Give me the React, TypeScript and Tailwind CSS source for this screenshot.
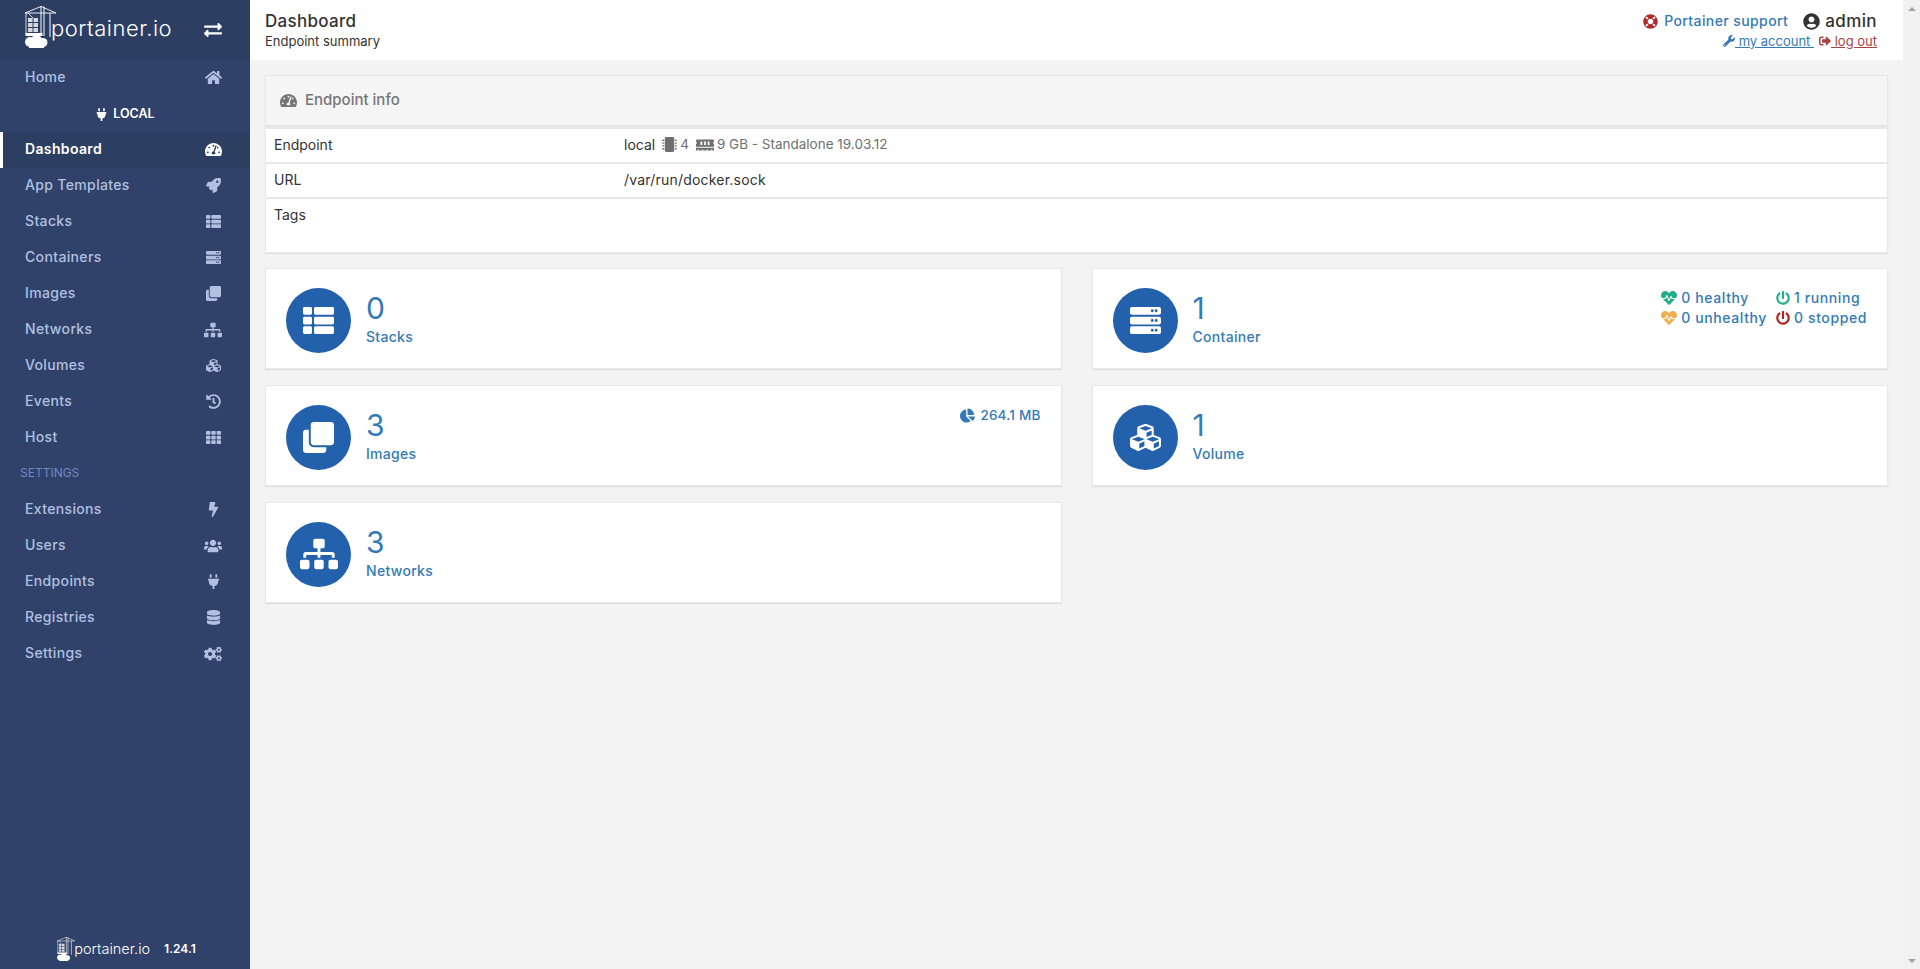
import React from "react";
import {
  FaHome, FaTachometerAlt, FaRocket, FaThList, FaServer, FaClone, FaSitemap, FaCubes, FaHistory, FaTh,
  FaBolt, FaUsers, FaPlug, FaDatabase, FaCogs, FaExchangeAlt, FaLifeRing, FaUserCircle, FaWrench,
  FaSignOutAlt, FaMicrochip, FaMemory, FaHeartbeat, FaPowerOff, FaChartPie,
} from "react-icons/fa";

const font = "font-['Inter','Liberation_Sans',sans-serif]";

function Logo({ small }: { small?: boolean }) {
  return (
    <svg viewBox="0 0 31 42" className={small ? "h-[24px] w-[18px]" : "h-[42px] w-[31px]"} fill="none">
      <path d="M0 7 L16 0.5 L31 7 M0 7 H31" stroke="#fff" strokeWidth="0.9" />
      <path d="M16 0 V30 M19 0.500 V30 M25 7 V31" stroke="#fff" strokeWidth="1" />
      <path d="M1 7 V28 M3 7 L8 12" stroke="#fff" strokeWidth="0.8" />
      <path d="M3 12h4.500v4H3zM8.500 12h4.500v4H8.500zM3 17h4.500v4H3zM8.500 17h4.500v4H8.500zM3 22h4.500v4H3zM8.500 22h4.500v4H8.500z" fill="#fff" fillOpacity="0.8" />
      <path d="M0.500 27h17v3h-17z" fill="#fff" />
      <circle cx="5" cy="36" r="5" fill="#fff" />
      <circle cx="11.500" cy="34.500" r="5.500" fill="#fff" />
      <circle cx="18" cy="36.500" r="4.500" fill="#fff" />
      <path d="M4 37h15v5H4z" fill="#fff" />
    </svg>
  );
}

const items: [string, React.ElementType, number, boolean?][] = [
  ["Dashboard", FaTachometerAlt, 17, true],
  ["App Templates", FaRocket, 15],
  ["Stacks", FaThList, 15],
  ["Containers", FaServer, 15],
  ["Images", FaClone, 15],
  ["Networks", FaSitemap, 18],
  ["Volumes", FaCubes, 15],
  ["Events", FaHistory, 15],
  ["Host", FaTh, 15],
];
const settings: [string, React.ElementType, number][] = [
  ["Extensions", FaBolt, 15],
  ["Users", FaUsers, 18],
  ["Endpoints", FaPlug, 15],
  ["Registries", FaDatabase, 15],
  ["Settings", FaCogs, 18],
];

function NavRow({ label, Icon, size, active }: { label: string; Icon: React.ElementType; size: number; active?: boolean }) {
  return (
    <div
      className={
        "flex h-9 items-center justify-between pb-[3px] pr-[28px] text-[14px] tracking-[0.35px] " +
        (active ? "border-l-[3px] border-white bg-[#2d3e63] pl-[22px] font-semibold text-white" : "pl-[25px] font-medium text-[#b1c0e0]")
      }
    >
      <span>{label}</span>
      <span className="flex w-[18px] justify-center pt-[2px]">
        <Icon size={size} />
      </span>
    </div>
  );
}

function Sidebar() {
  return (
    <aside className="flex h-full w-[250px] shrink-0 flex-col bg-[#30426a]">
      <div className="flex h-[60px] items-center justify-between bg-[#2d3e63] pl-[25px] pr-[28px]">
        <div className="-mt-[6px] flex items-center">
          <Logo />
          <span className="-ml-[5px] mt-[2px] text-[22px] font-light tracking-[0.5px] text-white">portainer.io</span>
        </div>
        <FaExchangeAlt className="text-[18px] text-white" />
      </div>
      <NavRow label="Home" Icon={FaHome} size={17} />
      <div className="flex h-9 items-center justify-center gap-[5px] text-[12.5px] font-semibold text-white">
        <FaPlug className="text-[13px]" />
        LOCAL
      </div>
      {items.map(([l, I, s, a]) => (
        <NavRow key={l} label={l} Icon={I} size={s} active={a} />
      ))}
      <div className="flex h-9 items-center pb-[2px] pl-[20px] text-[12px] text-[#6f8ac4]">SETTINGS</div>
      {settings.map(([l, I, s]) => (
        <NavRow key={l} label={l} Icon={I} size={s} />
      ))}
      <div className="mt-auto flex h-[40px] items-center justify-center pl-[3px]">
        <Logo small />
        <span className="-ml-[1px] text-[14.5px] font-light text-white">portainer.io</span>
        <span className="ml-[14px] text-[12px] font-semibold text-white">1.24.1</span>
      </div>
    </aside>
  );
}

function Header() {
  return (
    <header className="flex h-[60px] shrink-0 items-start justify-between bg-white pl-[15px] pr-[26px]">
      <div className="pt-[11px]">
        <div className="text-[17px] font-medium leading-[20px] tracking-[0.3px] text-[#333]">Dashboard</div>
        <div className="text-[13px] leading-[20px] text-[#333]">Endpoint summary</div>
      </div>
      <div className="flex flex-col items-end pt-[11px]">
        <div className="flex items-center leading-[20px]">
          <FaLifeRing className="mr-[6px] text-[15px] text-[#b22a2a]" />
          <span className="text-[14px] font-medium tracking-[0.4px] text-[#337ab7]">Portainer support</span>
          <FaUserCircle className="ml-[15px] mr-[5px] text-[17px] text-[#333]" />
          <span className="text-[17px] font-medium tracking-[0.4px] text-[#333]">admin</span>
        </div>
        <div className="flex items-center text-[13px] leading-[20px]">
          <span className="flex items-center text-[#337ab7] underline">
            <FaWrench className="text-[12px]" />
            <span>&nbsp;my account&nbsp;</span>
          </span>
          <span className="ml-[5px] flex items-center text-[#a94442] underline">
            <FaSignOutAlt className="text-[12px]" />
            <span>&nbsp;log out</span>
          </span>
        </div>
      </div>
    </header>
  );
}

function Row({ label, children, tall }: { label: string; children?: React.ReactNode; tall?: boolean }) {
  return (
    <div className={"flex border-t-2 border-[#e8e8e8] px-[8px] text-[14px] text-[#333] first:border-t-0 " + (tall ? "h-[55px] pt-[5px]" : "h-[35px] items-center pb-[2px]")}>
      <div className="w-[350px] shrink-0">{label}</div>
      <div className="flex items-center">{children}</div>
    </div>
  );
}

function EndpointInfo() {
  return (
    <section className="border border-[#e8e8e8] bg-white shadow-[0_1px_1px_rgba(0,0,0,0.08)]">
      <div className="flex h-[51px] items-center gap-[8px] border-b-2 border-[#e6e6e6] bg-[#f5f5f5] pl-[14px] text-[15px] font-medium text-[#767676]">
        <FaTachometerAlt className="text-[17px]" />
        Endpoint info
      </div>
      <Row label="Endpoint">
        <span>local</span>
        <span className="ml-[7px] flex items-center gap-[3px] text-[13.500px] text-[#6f6f6f]">
          <FaMicrochip className="text-[15px]" />4
        </span>
        <span className="ml-[7px] flex items-center gap-[3px] text-[13.500px] text-[#6f6f6f]">
          <FaMemory className="text-[18px]" />9 GB - Standalone 19.03.12
        </span>
      </Row>
      <Row label="URL"><span className="tracking-[0.2px]">/var/run/docker.sock</span></Row>
      <Row label="Tags" tall />
    </section>
  );
}

function Stat({ value, label, Icon, size = 31, children }: { value: string; label: string; Icon: React.ElementType; size?: number; children?: React.ReactNode }) {
  return (
    <div className="flex h-[101px] items-center justify-between border border-[#e8e8e8] bg-white pl-[20px] pr-[20px] shadow-[0_1px_1px_rgba(0,0,0,0.08)]">
      <div className="flex items-center">
        <div className="mt-[3px] flex h-[65px] w-[65px] items-center justify-center rounded-full bg-[#2361ad]">
          <Icon size={size} className="text-white" />
        </div>
        <div className="ml-[15px] text-[#337ab7]">
          <div className="text-[30px] font-normal leading-[36px]">{value}</div>
          <div className="mt-[1px] text-[14px] font-medium leading-[20px] tracking-[0.3px]">{label}</div>
        </div>
      </div>
      {children}
    </div>
  );
}

function ContainerStats() {
  const c = "flex items-center gap-[4px]";
  return (
    <div className="-mt-[21px] grid grid-cols-[auto_auto] gap-x-[9px] text-[14px] font-medium leading-[20px] tracking-[0.6px] text-[#337ab7]">
      <div className={c}><FaHeartbeat className="text-[16px] text-[#23ae89]" />0 healthy</div>
      <div className={c}><FaPowerOff className="text-[14px] text-[#23ae89]" />1 running</div>
      <div className={c}><FaHeartbeat className="text-[16px] text-[#f0ad4e]" />0 unhealthy</div>
      <div className={c}><FaPowerOff className="text-[14px] text-[#ae2323]" />0 stopped</div>
    </div>
  );
}

function Scrollbar() {
  return (
    <div className="flex h-full w-[17px] shrink-0 flex-col justify-between bg-[#f1f1f1]">
      <div className="flex h-[17px] items-center justify-center">
        <div className="h-0 w-0 border-x-[4px] border-b-[4px] border-x-transparent border-b-[#a3a3a3]" />
      </div>
      <div className="flex h-[17px] items-center justify-center">
        <div className="h-0 w-0 border-x-[4px] border-t-[4px] border-x-transparent border-t-[#a3a3a3]" />
      </div>
    </div>
  );
}

export default function App() {
  return (
    <div className={"flex h-[969px] w-[1920px] overflow-hidden bg-[#f3f3f3] " + font}>
      <Sidebar />
      <main className="flex min-w-0 flex-1 flex-col">
        <Header />
        <div className="flex flex-col gap-[15px] px-[15px] pt-[15px]">
          <EndpointInfo />
          <div className="grid grid-cols-2 gap-x-[30px] gap-y-[16px]">
            <Stat value="0" label="Stacks" Icon={FaThList} />
            <Stat value="1" label="Container" Icon={FaServer}><ContainerStats /></Stat>
            <Stat value="3" label="Images" Icon={FaClone}>
              <div className="-mt-[40px] flex items-center gap-[5px] text-[13.500px] font-medium tracking-[0.2px] text-[#337ab7]">
                <FaChartPie className="text-[15px]" />264.1 MB
              </div>
            </Stat>
            <Stat value="1" label="Volume" Icon={FaCubes} />
            <Stat value="3" label="Networks" Icon={FaSitemap} size={38} />
          </div>
        </div>
      </main>
      <Scrollbar />
    </div>
  );
}
